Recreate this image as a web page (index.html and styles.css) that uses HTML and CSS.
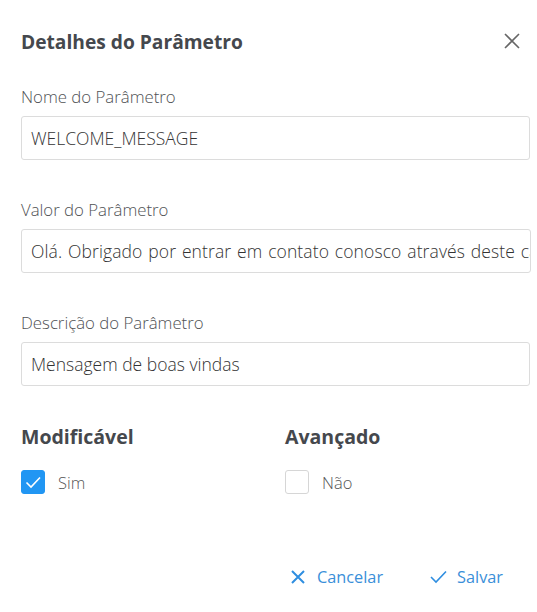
FILE: index.html
```html
<!DOCTYPE html>
<html lang="pt">
<head>
<meta charset="utf-8">
<title>Detalhes do Parâmetro</title>
<link rel="stylesheet" href="styles.css">
</head>
<body>
<div class="dialog">
  <header class="head">
    <h1 class="title">Detalhes do Parâmetro</h1>
    <button class="close" aria-label="Fechar">
      <svg width="16" height="16" viewBox="0 0 16 16"><path d="M1 1L15 15M15 1L1 15" stroke="#666" stroke-width="1.6" fill="none"/></svg>
    </button>
  </header>
  <div class="field">
    <label class="label">Nome do Parâmetro</label>
    <div class="input">WELCOME_MESSAGE</div>
  </div>
  <div class="field">
    <label class="label">Valor do Parâmetro</label>
    <div class="input clip">Olá. Obrigado por entrar em contato conosco através deste canal. Em breve retornaremos.</div>
  </div>
  <div class="field">
    <label class="label">Descrição do Parâmetro</label>
    <div class="input">Mensagem de boas vindas</div>
  </div>
  <div class="groups">
    <div class="group first">
      <h2 class="gtitle">Modificável</h2>
      <div class="check">
        <span class="box on"><svg width="24" height="24" viewBox="0 0 24 24"><path d="M5.5 12.5L10 17L19 7.5" stroke="#fff" stroke-width="1.6" fill="none"/></svg></span>
        <span class="ctext">Sim</span>
      </div>
    </div>
    <div class="group">
      <h2 class="gtitle">Avançado</h2>
      <div class="check">
        <span class="box"></span>
        <span class="ctext">Não</span>
      </div>
    </div>
  </div>
  <footer class="actions">
    <button class="btn">
      <svg width="14" height="14" viewBox="0 0 14 14"><path d="M1 1L13 13M13 1L1 13" stroke="#2f8ee0" stroke-width="2" fill="none"/></svg>
      Cancelar
    </button>
    <button class="btn save">
      <svg width="17" height="14" viewBox="0 0 17 14"><path d="M1 7L6 12L16 1.5" stroke="#2f8ee0" stroke-width="1.6" fill="none"/></svg>
      Salvar
    </button>
  </footer>
</div>
</body>
</html>
```
FILE: styles.css
```css
* { box-sizing: border-box; }
html, body { margin: 0; padding: 0; background: #fff; }
body { font-family: "Open Sans", "Noto Sans", sans-serif; color: #444; }
.dialog { width: 537px; height: 612px; padding: 26px 7px 0 21px; display: flex; flex-direction: column; }
.head { display: flex; align-items: center; justify-content: space-between; height: 30px; padding-right: 10px; }
.title { margin: 0; font-size: 19.2px; font-weight: 700; color: #45484d; }
.close { border: 0; background: none; padding: 0; width: 16px; height: 16px; display: flex; }
.field { display: flex; flex-direction: column; margin-top: 30px; }
.field + .field { margin-top: 39px; }
.label { font-size: 16.8px; font-weight: 300; color: #505255; line-height: 22px; margin-bottom: 8px; }
.input { width: 509px; height: 44px; border: 1px solid #dcdcdc; border-radius: 3px; padding: 0 9px; display: flex; align-items: center; font-size: 17.5px; font-weight: 300; color: #333; white-space: nowrap; overflow: hidden; }
.clip { width: 510px; padding-right: 0; word-spacing: 1.2px; letter-spacing: 0.1px; }
.groups { display: flex; margin-top: 38px; }
.group { display: flex; flex-direction: column; }
.group.first { width: 264px; flex-shrink: 0; }
.gtitle { margin: 0; font-size: 19.5px; font-weight: 700; color: #45484d; line-height: 26px; }
.check { display: flex; align-items: center; margin-top: 20px; }
.box { width: 24px; height: 24px; border: 1.5px solid #d6d6d6; border-radius: 3px; display: flex; }
.box.on { background: #2196f3; border-color: #2196f3; }
.box.on svg { margin: -1.5px; }
.ctext { margin-left: 13px; font-size: 16.5px; font-weight: 300; color: #555; }
.actions { display: flex; justify-content: flex-end; gap: 47px; margin-top: 72px; padding-right: 27px; }
.btn { border: 0; background: none; padding: 0; display: flex; align-items: center; gap: 12px; font-family: inherit; font-size: 16.3px; font-weight: 400; color: #3a8fd9; }
.btn.save { gap: 10px; }
```
